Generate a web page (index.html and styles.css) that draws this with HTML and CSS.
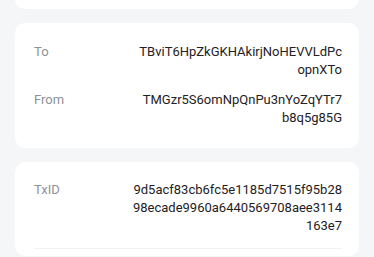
FILE: index.html
```html
<!DOCTYPE html>
<html>
<head>
<meta charset="utf-8">
<link rel="stylesheet" href="styles.css">
</head>
<body>
<div class="page">
  <div class="card card-top"></div>
  <div class="card card-addr">
    <div class="row">
      <div class="label">To</div>
      <div class="value">TBviT6HpZkGKHAkirjNoHEVVLdPcopnXTo</div>
    </div>
    <div class="row">
      <div class="label">From</div>
      <div class="value">TMGzr5S6omNpQnPu3nYoZqYTr7<br>b8q5g85G</div>
    </div>
  </div>
  <div class="card card-tx">
    <div class="row">
      <div class="label">TxID</div>
      <div class="value">9d5acf83cb6fc5e1185d7515f95b2898ecade9960a6440569708aee3114163e7</div>
    </div>
    <div class="divider"></div>
  </div>
</div>
</body>
</html>
```

FILE: styles.css
```css
html, body {
  margin: 0;
  padding: 0;
  background: #f5f6f8;
}
body {
  font-family: Roboto, "Noto Sans", sans-serif;
  font-size: 13px;
  line-height: 18px;
  color: #1f2124;
  overflow: hidden;
  height: 257px;
}
.page {
  display: flex;
  flex-direction: column;
  gap: 14px;
  padding: 0 15px;
  margin-top: -40px;
}
.card {
  background: #ffffff;
  border-radius: 10px;
  padding: 0 17px 0 19px;
}
.card-top {
  height: 49px;
}
.card-addr {
  display: flex;
  flex-direction: column;
  gap: 12px;
  padding-top: 20px;
  padding-bottom: 21px;
}
.card-tx {
  padding-top: 19px;
  height: 75px;
}
.row {
  display: flex;
  justify-content: space-between;
  align-items: flex-start;
}
.label {
  color: #8d929b;
}
.value {
  width: 210px;
  text-align: right;
  word-break: break-all;
}
.divider {
  margin-top: 13px;
  height: 1px;
  background: #eef0f3;
}
```
